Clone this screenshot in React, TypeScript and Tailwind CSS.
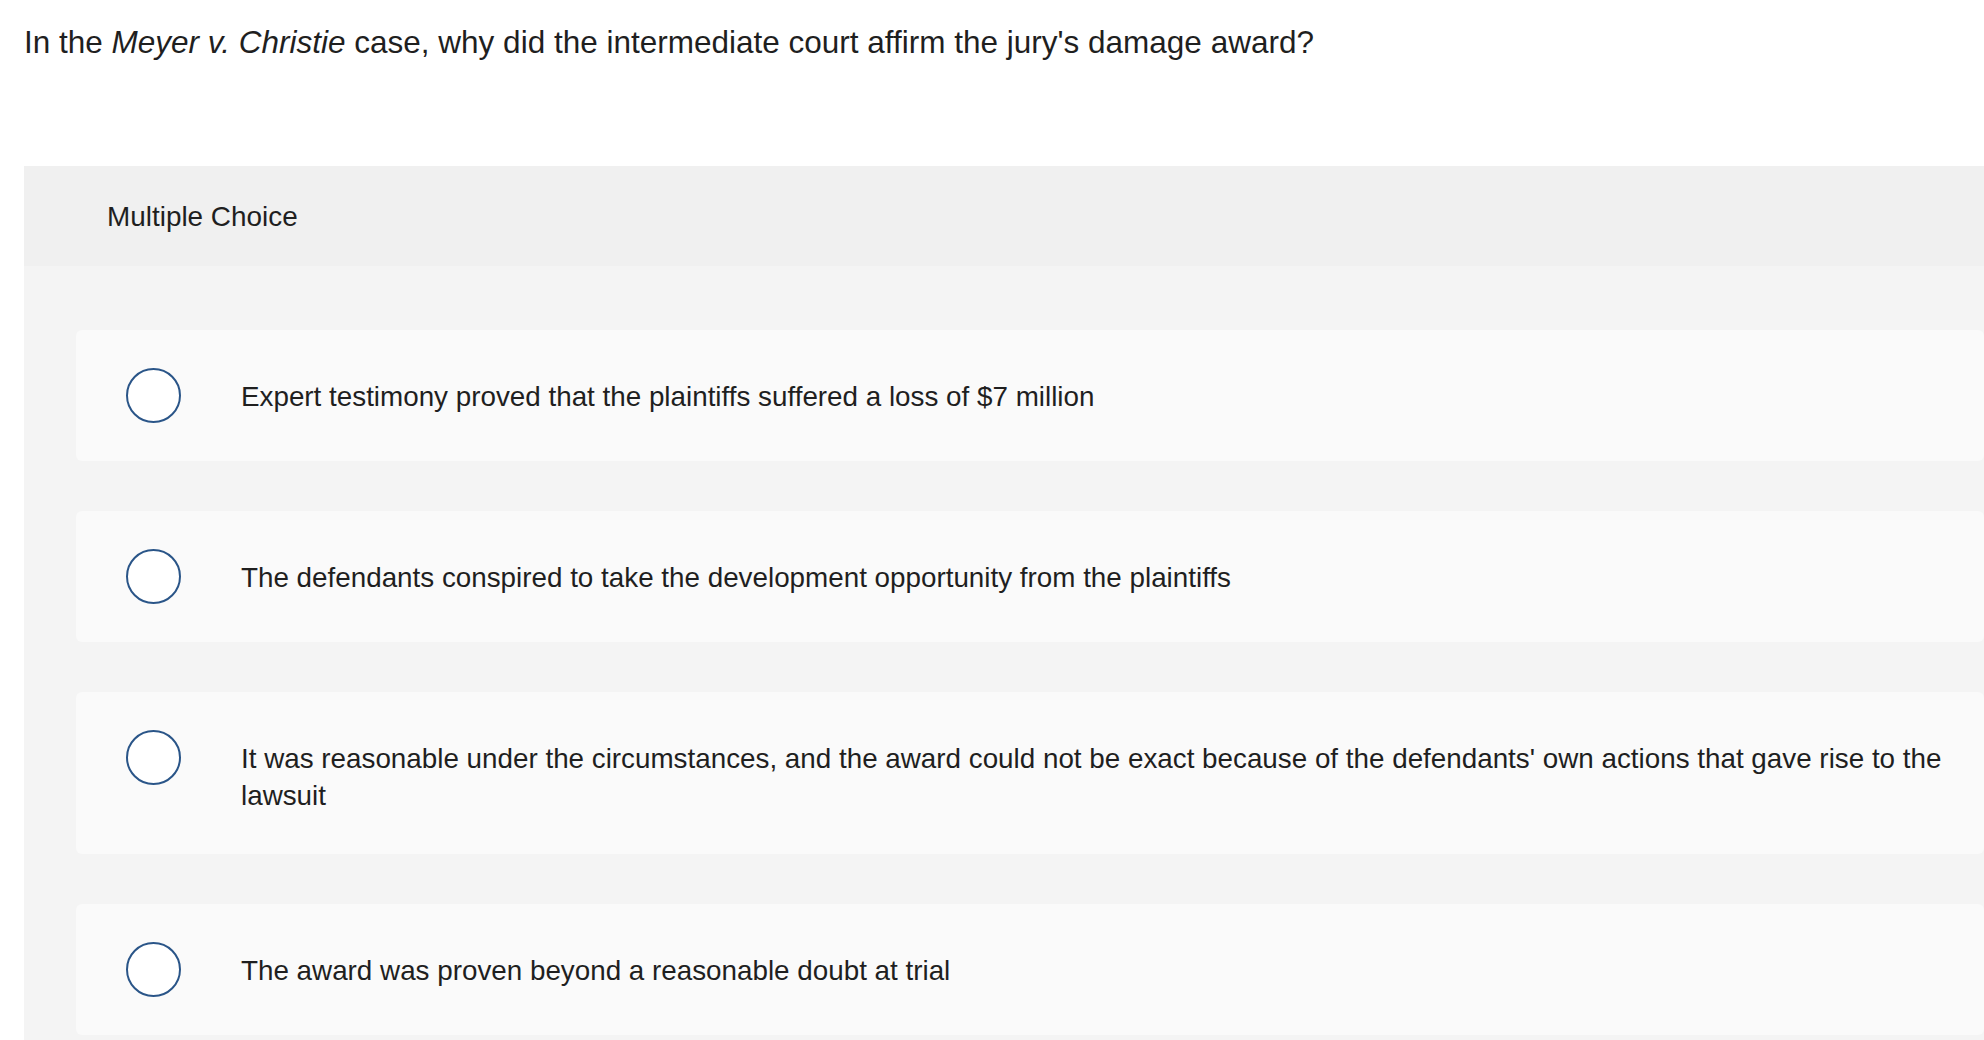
const choices = [
  "Expert testimony proved that the plaintiffs suffered a loss of $7 million",
  "The defendants conspired to take the development opportunity from the plaintiffs",
  "It was reasonable under the circumstances, and the award could not be exact because of the defendants' own actions that gave rise to the lawsuit",
  "The award was proven beyond a reasonable doubt at trial",
];

export default function App() {
  return (
    <div className="h-[1040px] w-full overflow-hidden bg-white font-['Liberation_Sans',Arial,sans-serif] text-[#1f1f1f]">
      {/* Question prompt */}
      <p className="pl-[24px] pt-[22px] text-[31.5px] leading-[40px]">
        In the <em>Meyer v. Christie</em> case, why did the intermediate court affirm the jury's damage award?
      </p>

      <section className="ml-[24px] mt-[104px]">
        <div className="flex h-[100px] items-center bg-[#f0f0f0] pl-[83px] pt-[2px] text-[27.9px]">
          Multiple Choice
        </div>

        <div className="flex flex-col gap-[50px] bg-[#f4f4f4] pb-[80px] pl-[52px] pt-[64px]">
          {choices.map((choice) => (
            <label
              key={choice}
              className="flex cursor-pointer items-start rounded-[6px] bg-[#fafafa] py-[38px] pl-[50px] pr-[20px]"
            >
              <span className="h-[55px] w-[55px] shrink-0 rounded-full border-2 border-[#2a5588] bg-white" />
              <span className="ml-[60px] pb-[2px] pt-[11px] text-[27.8px] leading-[36.5px]">{choice}</span>
            </label>
          ))}
        </div>
      </section>
    </div>
  );
}
